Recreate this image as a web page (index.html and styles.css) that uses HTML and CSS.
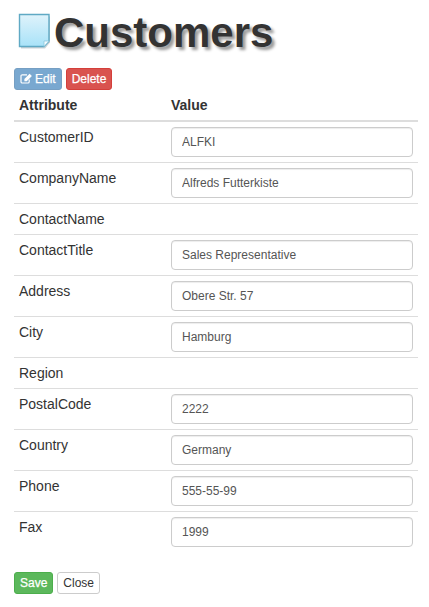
FILE: index.html
```html
<!DOCTYPE html>
<html lang="en">
<head>
<meta charset="utf-8">
<title>Customers</title>
<link rel="stylesheet" href="styles.css">
</head>
<body>
<h1 class="title">
  <svg class="doc-icon" width="34" height="37" viewBox="0 0 34 37" aria-hidden="true">
    <defs>
      <linearGradient id="paper" x1="0" y1="0" x2="0" y2="1">
        <stop offset="0" stop-color="#dff3fb"/>
        <stop offset="1" stop-color="#a8e2f8"/>
      </linearGradient>
    </defs>
    <path d="M2 2H31V28L26 34H2Z" fill="#8a9ca3" opacity=".45" transform="translate(1 1.5)"/>
    <path d="M1.5 1.5H31V28L26 33.5H1.5Z" fill="url(#paper)" stroke="#5fa9c4" stroke-width="1.4"/>
    <path d="M31 28H26V33.5Z" fill="#f2fbfe" stroke="#8cc6dc" stroke-width=".8"/>
  </svg>
  <span class="title-text">Customers</span>
</h1>
<div class="toolbar">
  <button class="btn btn-primary" type="button" disabled>
    <svg class="edit-icon" width="13" height="11" viewBox="0 0 13 11" aria-hidden="true">
      <path d="M9.2 6.4V8.7A1.3 1.3 0 0 1 7.9 10H2.3A1.3 1.3 0 0 1 1 8.7V3.1A1.3 1.3 0 0 1 2.3 1.8H7" fill="none" stroke="#fff" stroke-width="1.2"/>
      <path d="M4.4 5.9L9.6.8 11.9 3 6.7 8.2H4.4Z" fill="#fff"/>
    </svg>Edit</button>
  <button class="btn btn-danger" type="button">Delete</button>
</div>
<table class="grid">
  <thead>
    <tr><th class="col-attr">Attribute</th><th>Value</th></tr>
  </thead>
  <tbody>
    <tr><td>CustomerID</td><td><input class="field" value="ALFKI"></td></tr>
    <tr><td>CompanyName</td><td><input class="field" value="Alfreds Futterkiste"></td></tr>
    <tr><td>ContactName</td><td></td></tr>
    <tr><td>ContactTitle</td><td><input class="field" value="Sales Representative"></td></tr>
    <tr><td>Address</td><td><input class="field" value="Obere Str. 57"></td></tr>
    <tr><td>City</td><td><input class="field" value="Hamburg"></td></tr>
    <tr><td>Region</td><td></td></tr>
    <tr><td>PostalCode</td><td><input class="field" value="2222"></td></tr>
    <tr><td>Country</td><td><input class="field" value="Germany"></td></tr>
    <tr><td>Phone</td><td><input class="field" value="555-55-99"></td></tr>
    <tr><td>Fax</td><td><input class="field" value="1999"></td></tr>
  </tbody>
</table>
<div class="footer">
  <button class="btn btn-success" type="button">Save</button>
  <button class="btn btn-default" type="button">Close</button>
</div>
</body>
</html>
```
FILE: styles.css
```css
* { box-sizing: border-box; }
html, body { height: 100%; }
body {
  margin: 0;
  padding: 0 11px 0 14px;
  background: #fff;
  color: #333;
  font: 14px/20px "Liberation Sans", Arial, sans-serif;
  overflow: hidden;
}
.title {
  display: flex;
  align-items: center;
  gap: 2px;
  height: 68px;
  margin: 0;
  padding: 0 0 4px 4px;
  font-size: 42px;
  line-height: 48px;
  font-weight: 700;
  text-shadow: 3px 3px 3px rgba(0, 0, 0, .4);
}
.title-text { padding-top: 2px; }
.doc-icon { flex: none; margin-top: -2px; }
.toolbar { display: flex; gap: 4px; }
.btn {
  height: 22px;
  padding: 0 5px;
  border: 1px solid transparent;
  border-radius: 3px;
  font: 12px/18px "Liberation Sans", Arial, sans-serif;
  color: #fff;
}
.btn-primary { background: #337ab7; border-color: #2e6da4; opacity: .65; }
.btn-danger { background: #d9534f; border-color: #d43f3a; }
.btn-success { background: #5cb85c; border-color: #4cae4c; }
.btn-default { background: #fff; border-color: #ccc; color: #333; }
.btn-primary, .btn-danger, .btn-success { -webkit-text-stroke: .25px #fff; }
.edit-icon { margin-right: 2px; vertical-align: -1px; }
.grid {
  width: 404px;
  border-collapse: collapse;
  table-layout: fixed;
}
.col-attr { width: 152px; }
.grid th {
  padding: 5px;
  text-align: left;
  font-weight: 700;
  border-bottom: 2px solid #ddd;
  height: 31px;
}
.grid td {
  padding: 5px;
  vertical-align: top;
  border-top: 1px solid #ddd;
}
.grid tbody tr:first-child td { border-top: 0; }
.grid tbody tr:last-child td { border-bottom: 0; }
.field {
  display: block;
  width: 242px;
  height: 30px;
  padding: 5px 10px;
  border: 1px solid #ccc;
  border-radius: 4px;
  box-shadow: inset 0 1px 1px rgba(0, 0, 0, .075);
  background: #fff;
  color: #555;
  font: 12px/18px "Liberation Sans", Arial, sans-serif;
}
.footer { display: flex; gap: 4px; margin-top: 20px; }
```
